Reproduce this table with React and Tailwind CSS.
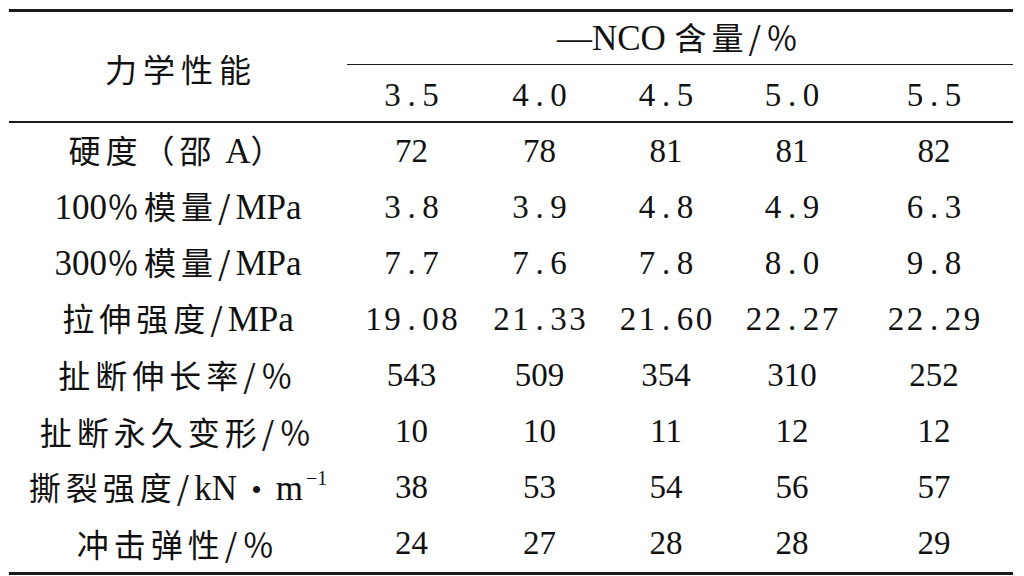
import React from "react";

const C = ({ children }) => (
  <span className="tracking-[5px]" style={{ fontFamily: '"Noto Sans CJK SC", sans-serif' }}>{children}</span>
);
const L = ({ children, className = "text-[35px]" }) => (
  <span className={className} style={{ fontFamily: '"Liberation Serif", serif' }}>{children}</span>
);

const rows = [
  [<><C>硬度（邵</C><L> A</L><C>）</C></>, ["72", "78", "81", "81", "82"], false],
  [<><L>100</L><C>％模量/</C><L>MPa</L></>, ["3.8", "3.9", "4.8", "4.9", "6.3"], true],
  [<><L>300</L><C>％模量/</C><L>MPa</L></>, ["7.7", "7.6", "7.8", "8.0", "9.8"], true],
  [<><C>拉伸强度/</C><L>MPa</L></>, ["19.08", "21.33", "21.60", "22.27", "22.29"], true],
  [<><C>扯断伸长率/％</C></>, ["543", "509", "354", "310", "252"], false],
  [<><C>扯断永久变形/％</C></>, ["10", "10", "11", "12", "12"], false],
  [
    <>
      <C>撕裂强度/</C>
      <L>kN</L>
      <L className="text-[30px] mx-[14px]">•</L>
      <L>m</L>
      <span
        className="inline-block align-top text-[20px] leading-none ml-[3px] -mt-[2px]"
        style={{ fontFamily: '"Liberation Serif", serif' }}
      >
        −1
      </span>
    </>,
    ["38", "53", "54", "56", "57"],
    false,
  ],
  [<><C>冲击弹性/％</C></>, ["24", "27", "28", "28", "29"], false],
];

const grid = "grid grid-cols-[338px_129px_127px_126px_126px_158px]";

const Num = ({ v, mono, className = "" }) => (
  <div className={`flex items-center justify-center ${className}`}>
    <span className="text-[33px]" style={{ fontFamily: '"Liberation Serif", serif' }}>
      {mono
        ? v.split("").map((ch, k) => (
            <span key={k} className="inline-block w-[19px] text-center">
              {ch}
            </span>
          ))
        : v}
    </span>
  </div>
);

export default function App() {
  return (
    <div className="w-[1024px] h-[576px] bg-white text-[#111] overflow-hidden">
      <div className="ml-[9px] mt-[9px] w-[1004px] border-t-[3px] border-b-[3px] border-[#1a1a1a] text-[32px] leading-none">
        {/* header */}
        <div className={`${grid} grid-rows-[53px_56px] border-b-[2px] border-[#1a1a1a]`}>
          <div className="row-span-2 flex items-center justify-center pt-[3px]">
            <span className="tracking-[6px] pl-[6px]" style={{ fontFamily: '"Noto Sans CJK SC", sans-serif' }}>力学性能</span>
          </div>
          <div className="col-span-5 flex items-center justify-center border-b border-[#1a1a1a]">
            <span className="whitespace-pre">
              <L>—NCO </L>
              <C>含量/％</C>
            </span>
          </div>
          {["3.5", "4.0", "4.5", "5.0", "5.5"].map((v) => (
            <Num key={v} v={v} mono className="pt-[5px]" />
          ))}
        </div>
        {/* body */}
        <div className={`${grid} auto-rows-[56.1px]`}>
          {rows.map(([label, vals, mono], i) => (
            <React.Fragment key={i}>
              <div className="flex items-center justify-center">
                <span className="whitespace-pre">{label}</span>
              </div>
              {vals.map((v, j) => (
                <Num key={j} v={v} mono={mono} />
              ))}
            </React.Fragment>
          ))}
        </div>
      </div>
    </div>
  );
}
